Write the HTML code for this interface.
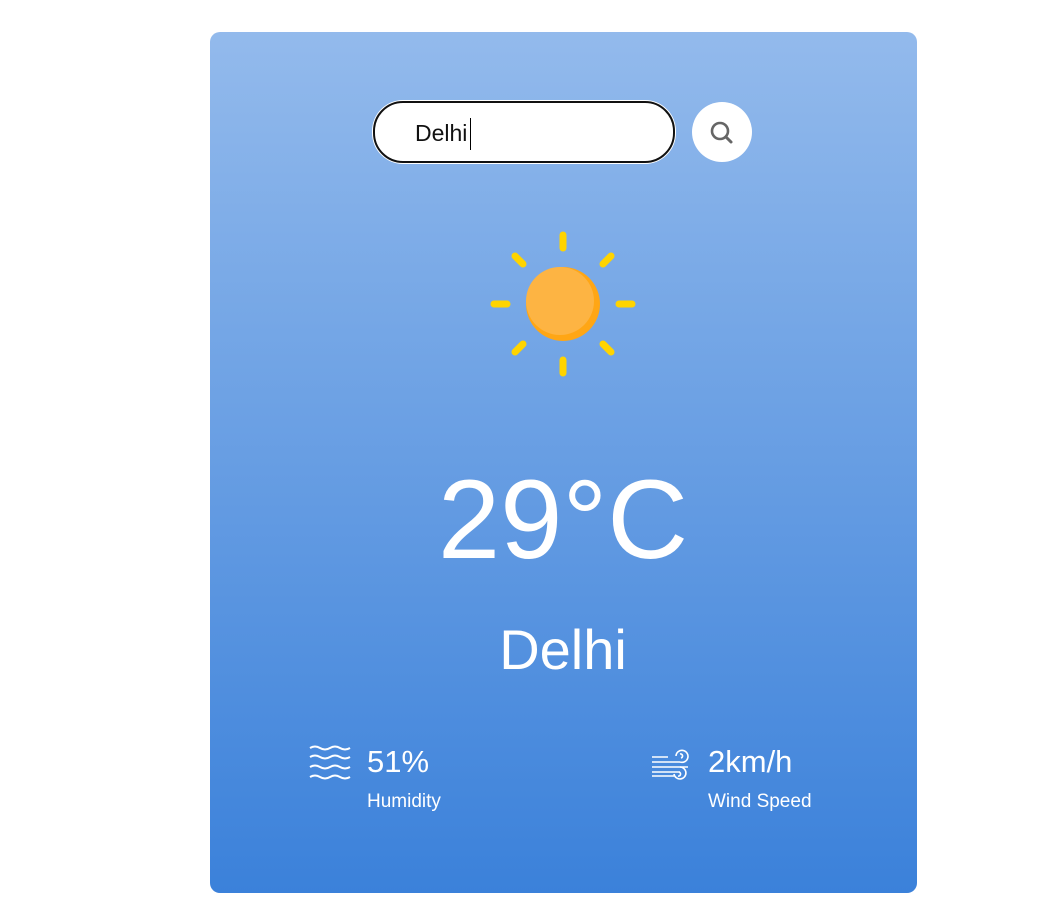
<!DOCTYPE html>
<html><head><style>
body{margin:0;width:1050px;height:914px;background:#fff;font-family:"Liberation Sans",sans-serif;position:relative;overflow:hidden}
.card{position:absolute;left:210px;top:32px;width:707px;height:861px;border-radius:10px;background:linear-gradient(#93baec,#3b81da)}
.inp{position:absolute;left:373px;top:101px;width:298px;height:58px;border:2px solid #111;border-radius:30px;background:#fff;box-shadow:0 0 0 1px #fff}
.inp span{position:absolute;left:40px;top:17px;font-size:23px;color:#111}
.inp i{position:absolute;left:95px;top:15px;width:1px;height:32px;background:#000}
.btn{position:absolute;left:692px;top:102px;width:60px;height:60px;border-radius:50%;background:#fff}
.t{position:absolute;color:#fff;white-space:nowrap}
</style></head><body>
<div class="card"></div>
<div class="inp"><span>Delhi</span><i></i></div>
<div class="btn"><svg width="60" height="60"><circle cx="28" cy="29" r="8" fill="none" stroke="#666" stroke-width="2.6"/><line x1="34" y1="35" x2="39" y2="40" stroke="#666" stroke-width="3" stroke-linecap="round"/></svg></div>
<svg style="position:absolute;left:483px;top:224px" width="160" height="160">
<g stroke="#ffd400" stroke-width="7" stroke-linecap="round">
<line x1="80" y1="11" x2="80" y2="24"/><line x1="80" y1="136" x2="80" y2="149"/>
<line x1="11" y1="80" x2="24" y2="80"/><line x1="136" y1="80" x2="149" y2="80"/>
<line x1="32" y1="32" x2="40" y2="40"/><line x1="128" y1="32" x2="120" y2="40"/>
<line x1="32" y1="128" x2="40" y2="120"/><line x1="128" y1="128" x2="120" y2="120"/></g>
<circle cx="80" cy="80" r="37" fill="#ffa615"/>
<circle cx="77" cy="77" r="34" fill="#fdb443"/>
</svg>
<div class="t" style="left:363px;width:400px;text-align:center;top:455px;font-size:112px">29°C</div>
<div class="t" style="left:363px;width:400px;text-align:center;top:617px;font-size:56px">Delhi</div>
<svg style="position:absolute;left:308px;top:744px" width="46" height="40"><g fill="none" stroke="#fff" stroke-width="2">
<path d="M2 4q5-3 10 0t10 0t10 0t10 0"/><path d="M2 13q5-3 10 0t10 0t10 0t10 0"/><path d="M2 23q5-3 10 0t10 0t10 0t10 0"/><path d="M2 33q5-3 10 0t10 0t10 0t10 0"/></g></svg>
<div class="t" style="left:367px;top:744px;font-size:31px">51%</div>
<div class="t" style="left:367px;top:791px;font-size:19px">Humidity</div>
<svg style="position:absolute;left:650px;top:744px" width="44" height="44"><g fill="none" stroke="#fff" stroke-width="1.6">
<path d="M2 13h16M2 18h28"/><path d="M26 12a6 6 0 1 1 4 6"/><path d="M30 10a2 2 0 1 1 1 4"/>
<path d="M2 23h36M2 28h28"/><path d="M30 23a6 6 0 1 1-6 7"/><path d="M29 28a2 2 0 1 1-1 4"/><path d="M2 32h22"/></g></svg>
<div class="t" style="left:708px;top:744px;font-size:31px">2km/h</div>
<div class="t" style="left:708px;top:791px;font-size:19px">Wind Speed</div>
</body></html>
